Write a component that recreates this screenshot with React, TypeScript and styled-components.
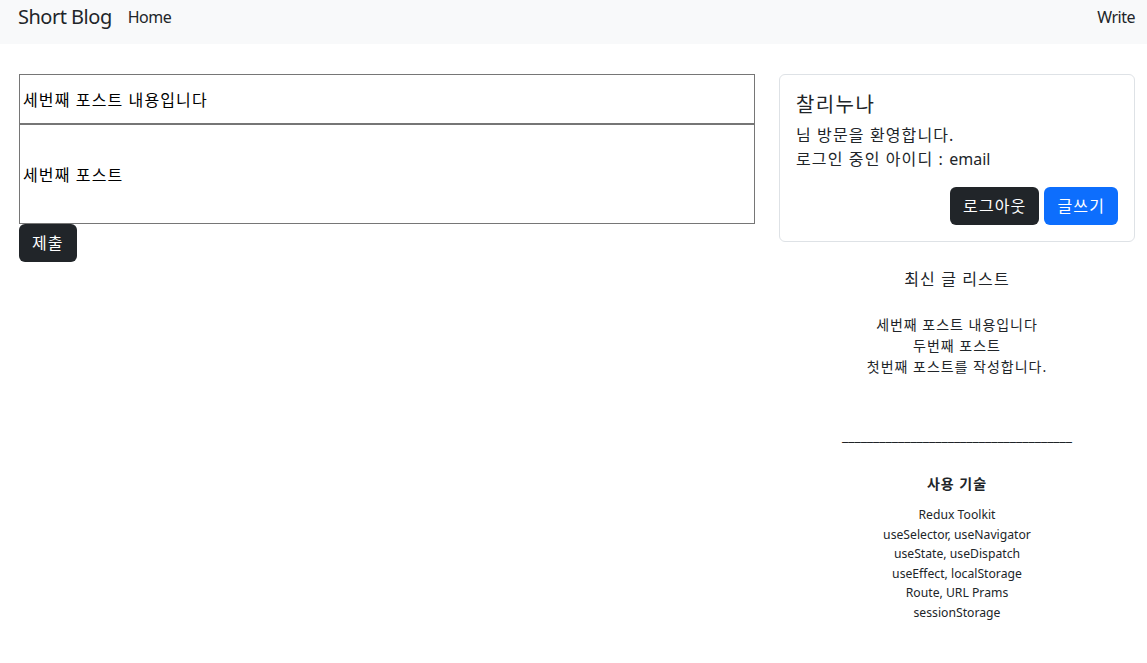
import styled, { createGlobalStyle } from "styled-components";

const GlobalStyle = createGlobalStyle`
  body {
    margin: 0;
    font-family: "Segoe UI", "Noto Sans", "Noto Sans CJK KR", sans-serif;
    color: #212529;
    background: #fff;
  }
  * { box-sizing: border-box; }
`;

const posts = ["세번째 포스트 내용입니다", "두번째 포스트", "첫번째 포스트를 작성합니다."];
const techs = [
  "Redux Toolkit",
  "useSelector, useNavigator",
  "useState, useDispatch",
  "useEffect, localStorage",
  "Route, URL Prams",
  "sessionStorage",
];

export default function App() {
  return (
    <>
      <GlobalStyle />
      <Navbar>
        <Brand>Short Blog</Brand>
        <NavLink>Home</NavLink>
        <Spacer />
        <NavLink>Write</NavLink>
      </Navbar>
      <Main>
        <FormColumn>
          <TitleInput defaultValue="세번째 포스트 내용입니다" />
          <BodyInput defaultValue="세번째 포스트" />
          <Button>제출</Button>
        </FormColumn>
        <Sidebar>
          <Card>
            <CardTitle>찰리누나</CardTitle>
            <CardText>님 방문을 환영합니다.</CardText>
            <CardText>
              로그인 중인 아이디 : <Latin>email</Latin>
            </CardText>
            <CardActions>
              <Button>로그아웃</Button>
              <Button $primary>글쓰기</Button>
            </CardActions>
          </Card>
          <SectionTitle>최신 글 리스트</SectionTitle>
          <PostList>
            {posts.map((p) => (
              <li key={p}>{p}</li>
            ))}
          </PostList>
          <Divider>_____________________________________</Divider>
          <TechTitle>사용 기술</TechTitle>
          <TechList>
            {techs.map((t) => (
              <li key={t}>{t}</li>
            ))}
          </TechList>
        </Sidebar>
      </Main>
    </>
  );
}

// hangul in the reference runs a little wider than Noto CJK
const hangul = "letter-spacing: 0.07em;";

const Navbar = styled.nav`
  display: flex;
  align-items: center;
  height: 44px;
  padding: 0 12px 10px 18px;
  background: #f8f9fa;
  letter-spacing: -0.5px;
`;

const Brand = styled.span`
  font-size: 20px;
  line-height: 30px;
  margin-right: 16px;
`;

const NavLink = styled.span`
  font-size: 16px;
  line-height: 24px;
`;

const Spacer = styled.div`
  flex: 1;
`;

const Main = styled.main`
  display: flex;
  align-items: flex-start;
  gap: 24px;
  padding: 30px 12px 0 19px;
`;

const FormColumn = styled.div`
  width: 736px;
  display: flex;
  flex-direction: column;
  align-items: flex-start;
`;

const TitleInput = styled.input`
  width: 100%;
  height: 50px;
  border: 1px solid #767676;
  padding: 0 3px;
  font: inherit;
  font-size: 16px;
  ${hangul}
  color: #000;
  outline: none;
`;

const BodyInput = styled(TitleInput)`
  height: 100px;
`;

const Button = styled.button<{ $primary?: boolean }>`
  font: inherit;
  font-size: 16px;
  ${hangul}
  line-height: 24px;
  height: 38px;
  padding: 6px 13px;
  border: none;
  border-radius: 6px;
  color: #fff;
  background: ${(p) => (p.$primary ? "#0d6efd" : "#212529")};
`;

const Sidebar = styled.aside`
  width: 356px;
  display: flex;
  flex-direction: column;
  align-items: center;
  text-align: center;
`;

const Card = styled.div`
  width: 100%;
  text-align: left;
  border: 1px solid #dee2e6;
  border-radius: 6px;
  padding: 18px 16px 16px;
`;

const CardTitle = styled.h5`
  margin: 0 0 6px;
  font-size: 20px;
  font-weight: 400;
  line-height: 24px;
  ${hangul}
`;

const CardText = styled.p`
  margin: 0;
  font-size: 16px;
  line-height: 24px;
  ${hangul}
`;

const Latin = styled.span`
  letter-spacing: 0;
`;

const CardActions = styled.div`
  display: flex;
  justify-content: flex-end;
  gap: 5px;
  margin-top: 16px;
`;

const SectionTitle = styled.div`
  margin-top: 25px;
  font-size: 16px;
  line-height: 24px;
  ${hangul}
`;

const PostList = styled.ul`
  list-style: none;
  margin: 23px 0 0;
  padding: 0;
  font-size: 14px;
  line-height: 21px;
  ${hangul}
`;

const Divider = styled.div`
  margin-top: 48px;
  font-size: 14px;
  line-height: 21px;
`;

const TechTitle = styled.div`
  margin-top: 27px;
  font-size: 14px;
  font-weight: 700;
  line-height: 21px;
  ${hangul}
`;

const TechList = styled.ul`
  list-style: none;
  margin: 11px 0 0;
  padding: 0;
  font-size: 12.2px;
  line-height: 19.6px;
`;
